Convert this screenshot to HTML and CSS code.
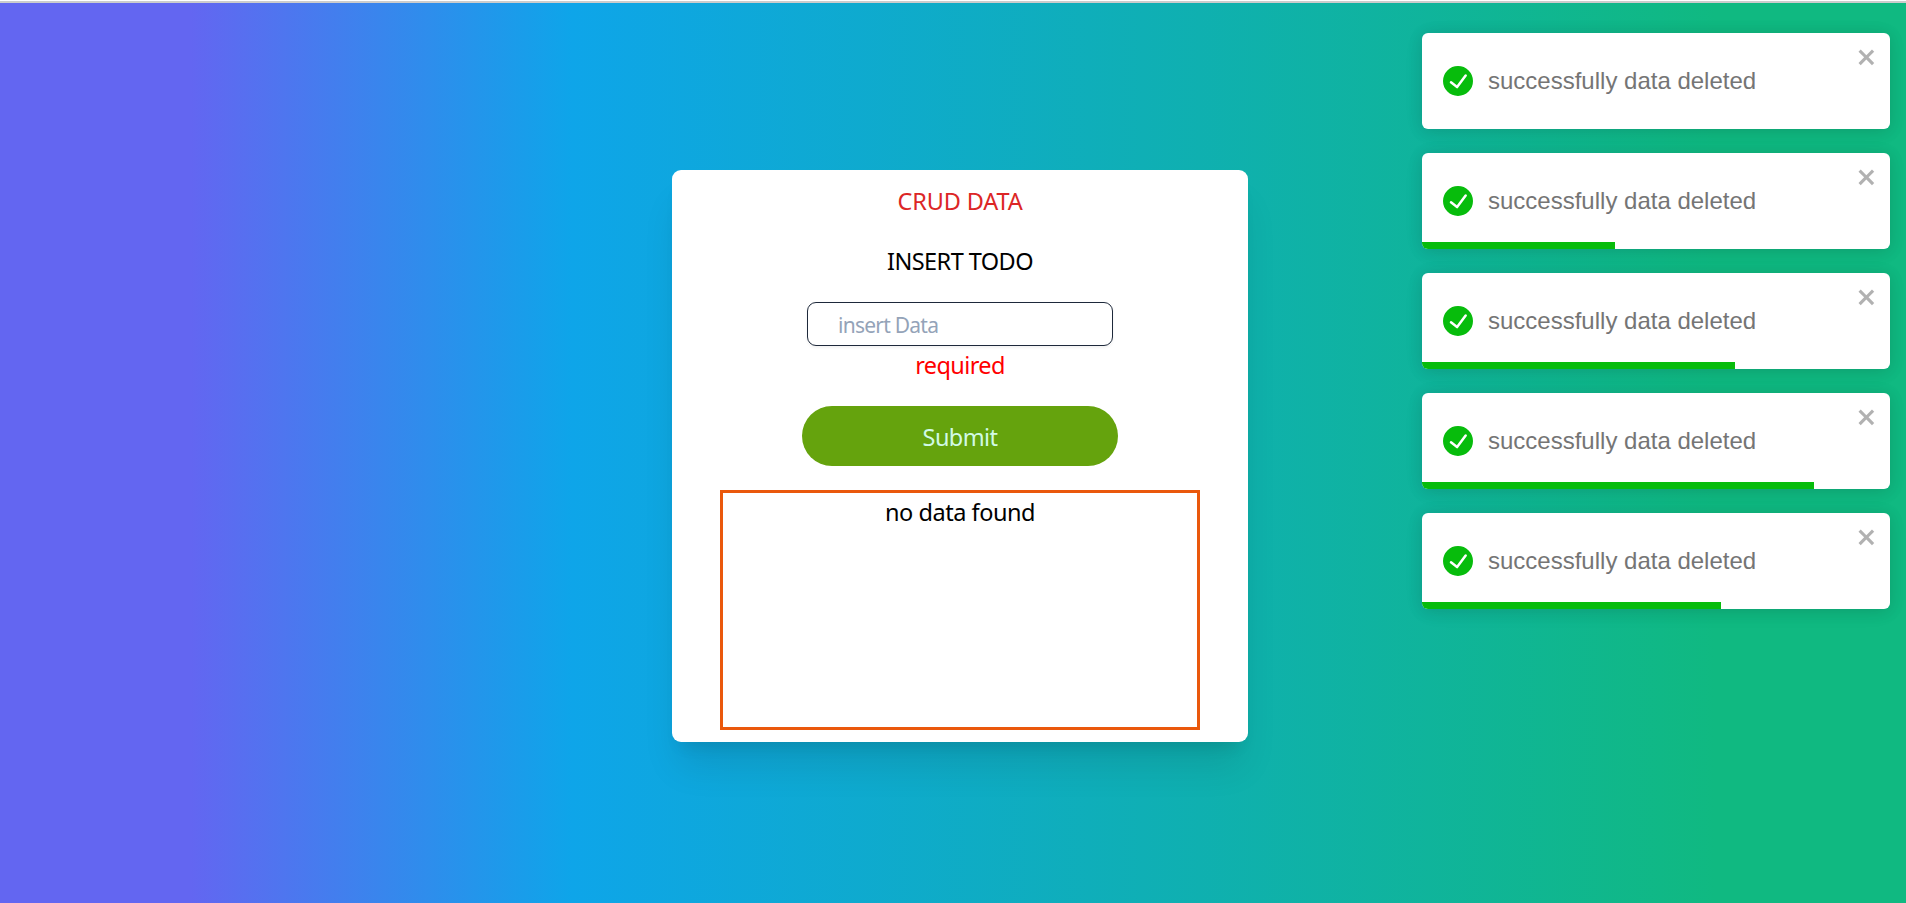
FILE: index.html
```html
<!DOCTYPE html>
<html lang="en">
<head>
<meta charset="utf-8">
<title>CRUD DATA</title>
<link rel="stylesheet" href="styles.css">
</head>
<body>
<main class="page">
  <section class="card">
    <h1 class="title">CRUD DATA</h1>
    <h2 class="subtitle">INSERT TODO</h2>
    <form class="form">
      <input class="field" type="text" placeholder="insert Data">
      <p class="error">required</p>
      <button class="submit" type="button">Submit</button>
    </form>
    <div class="list"><p class="empty">no data found</p></div>
  </section>
</main>
<aside class="toasts">
  <div class="toast">
    <svg class="check" viewBox="0 0 24 24"><path d="M12 0a12 12 0 1012 12A12.014 12.014 0 0012 0zm6.927 8.2l-6.845 9.289a1.011 1.011 0 01-1.43.188l-4.888-3.908a1 1 0 111.25-1.562l4.076 3.261 6.227-8.451a1 1 0 111.61 1.183z"/></svg>
    <span class="message">successfully data deleted</span>
    <svg class="close" viewBox="0 0 14 16"><path fill-rule="evenodd" d="M7.71 8.23l3.75 3.75-1.48 1.48-3.75-3.75-3.75 3.75L1 11.98l3.75-3.75L1 4.48 2.48 3l3.75 3.75L9.98 3l1.48 1.48-3.75 3.75z"/></svg>
  </div>
  <div class="toast">
    <svg class="check" viewBox="0 0 24 24"><path d="M12 0a12 12 0 1012 12A12.014 12.014 0 0012 0zm6.927 8.2l-6.845 9.289a1.011 1.011 0 01-1.43.188l-4.888-3.908a1 1 0 111.25-1.562l4.076 3.261 6.227-8.451a1 1 0 111.61 1.183z"/></svg>
    <span class="message">successfully data deleted</span>
    <svg class="close" viewBox="0 0 14 16"><path fill-rule="evenodd" d="M7.71 8.23l3.75 3.75-1.48 1.48-3.75-3.75-3.75 3.75L1 11.98l3.75-3.75L1 4.48 2.48 3l3.75 3.75L9.98 3l1.48 1.48-3.75 3.75z"/></svg>
    <div class="progress" style="width:193px"></div>
  </div>
  <div class="toast">
    <svg class="check" viewBox="0 0 24 24"><path d="M12 0a12 12 0 1012 12A12.014 12.014 0 0012 0zm6.927 8.2l-6.845 9.289a1.011 1.011 0 01-1.43.188l-4.888-3.908a1 1 0 111.25-1.562l4.076 3.261 6.227-8.451a1 1 0 111.61 1.183z"/></svg>
    <span class="message">successfully data deleted</span>
    <svg class="close" viewBox="0 0 14 16"><path fill-rule="evenodd" d="M7.71 8.23l3.75 3.75-1.48 1.48-3.75-3.75-3.75 3.75L1 11.98l3.75-3.75L1 4.48 2.48 3l3.75 3.75L9.98 3l1.48 1.48-3.75 3.75z"/></svg>
    <div class="progress" style="width:313px"></div>
  </div>
  <div class="toast">
    <svg class="check" viewBox="0 0 24 24"><path d="M12 0a12 12 0 1012 12A12.014 12.014 0 0012 0zm6.927 8.2l-6.845 9.289a1.011 1.011 0 01-1.43.188l-4.888-3.908a1 1 0 111.25-1.562l4.076 3.261 6.227-8.451a1 1 0 111.61 1.183z"/></svg>
    <span class="message">successfully data deleted</span>
    <svg class="close" viewBox="0 0 14 16"><path fill-rule="evenodd" d="M7.71 8.23l3.75 3.75-1.48 1.48-3.75-3.75-3.75 3.75L1 11.98l3.75-3.75L1 4.48 2.48 3l3.75 3.75L9.98 3l1.48 1.48-3.75 3.75z"/></svg>
    <div class="progress" style="width:392px"></div>
  </div>
  <div class="toast">
    <svg class="check" viewBox="0 0 24 24"><path d="M12 0a12 12 0 1012 12A12.014 12.014 0 0012 0zm6.927 8.2l-6.845 9.289a1.011 1.011 0 01-1.43.188l-4.888-3.908a1 1 0 111.25-1.562l4.076 3.261 6.227-8.451a1 1 0 111.61 1.183z"/></svg>
    <span class="message">successfully data deleted</span>
    <svg class="close" viewBox="0 0 14 16"><path fill-rule="evenodd" d="M7.71 8.23l3.75 3.75-1.48 1.48-3.75-3.75-3.75 3.75L1 11.98l3.75-3.75L1 4.48 2.48 3l3.75 3.75L9.98 3l1.48 1.48-3.75 3.75z"/></svg>
    <div class="progress" style="width:299px"></div>
  </div>
</aside>
</body>
</html>
```
FILE: styles.css
```css
* { box-sizing: border-box; margin: 0; padding: 0; }
html { border-top: 1px solid #fff; background: #fff; overflow: hidden; }
body {
  height: 902px;
  overflow: hidden;
  border-top: 2px solid #ccc;
  font-family: "Noto Sans", "Open Sans", sans-serif;
  font-size: 23.5px;
  line-height: 36px;
  color: #000;
}
.page {
  height: 900px;
  padding-top: 167px;
  background: linear-gradient(to right, #6366f1 10%, #0ea5e9 30%, #10b981 90%);
}
.card {
  display: flex;
  flex-direction: column;
  align-items: center;
  width: 576px;
  height: 572px;
  margin-left: 672px;
  padding-top: 13px;
  border-radius: 9px;
  background: #fff;
  box-shadow: 0 30px 37.5px -7.5px rgb(0 0 0 / .1), 0 12px 15px -9px rgb(0 0 0 / .1);
}
.title, .subtitle { font-size: 23.5px; font-weight: 400; white-space: nowrap; }
.title { color: #dc2626; letter-spacing: -.15px; }
.subtitle { margin-top: 24px; letter-spacing: -.55px; }
.form { display: flex; flex-direction: column; align-items: center; }
.field {
  width: 306px;
  height: 44px;
  margin-top: 23px;
  padding: 2px 30px 0;
  border: 1px solid #1e293b;
  border-radius: 9px;
  background: #fff;
  box-shadow: 0 1.5px 3px rgb(0 0 0 / .05);
  font: 21px "Noto Sans", "Open Sans", sans-serif;
  letter-spacing: -.75px;
}
.field::placeholder { color: #94a3b8; opacity: 1; }
.error { height: 36px; margin-top: 1px; color: #f00; letter-spacing: -.6px; }
.submit {
  width: 316px;
  height: 60px;
  margin-top: 23px;
  padding-top: 1px;
  border: 0;
  border-radius: 30px;
  background: #65a30d;
  color: #d1fae5;
  font: 23.5px "Noto Sans", "Open Sans", sans-serif;
  letter-spacing: -.6px;
}
.list {
  width: 480px;
  height: 240px;
  margin-top: 24px;
  border: 3px solid #ea580c;
  text-align: center;
}
.empty { padding-top: 1px; letter-spacing: -.47px; }
.toasts {
  position: absolute;
  top: 33px;
  right: 16px;
  display: flex;
  flex-direction: column;
  gap: 24px;
  width: 468px;
}
.toast {
  position: relative;
  display: flex;
  align-items: center;
  height: 96px;
  padding: 0 21px;
  border-radius: 6px;
  overflow: hidden;
  background: #fff;
  box-shadow: 0 1.5px 15px rgb(0 0 0 / .1), 0 3px 22.5px rgb(0 0 0 / .05);
  color: #757575;
  font: 24px/36px "Liberation Sans", Arial, sans-serif;
}
.check { flex: none; width: 30px; height: 30px; margin-right: 15px; fill: #07bc0c; }
.message { white-space: nowrap; }
.close {
  align-self: flex-start;
  width: 21px;
  height: 24px;
  margin: 12px -9px 0 auto;
  fill: #000;
  opacity: .3;
}
.progress { position: absolute; left: 0; bottom: 0; height: 7px; background: #07bc0c; }
```
